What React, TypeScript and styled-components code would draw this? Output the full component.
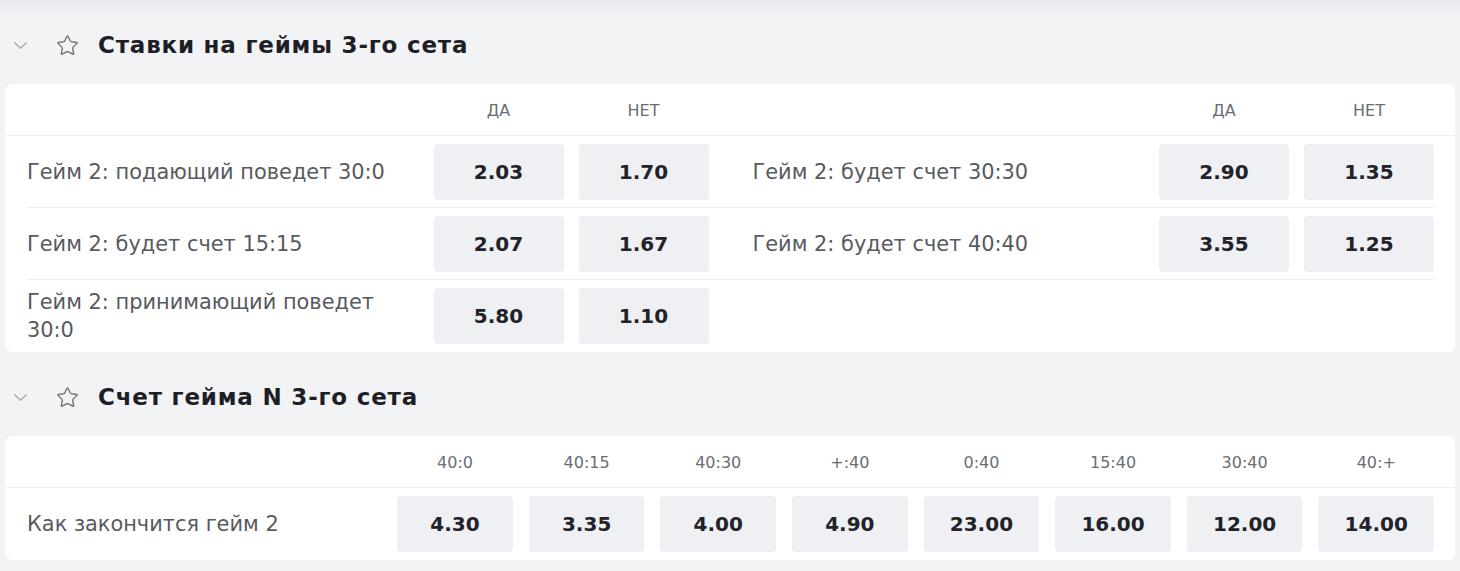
import React from "react";
import styled, { createGlobalStyle } from "styled-components";
import { ChevronDown, Star } from "lucide-react";

const Global = createGlobalStyle`
  html, body { margin: 0; padding: 0; background: #f2f3f5; }
  body { font-family: "DejaVu Sans", "Noto Sans", sans-serif; }
  * { box-sizing: border-box; }
`;

const Page = styled.div`
  width: 1460px;
  padding: 0 5px;
  background: linear-gradient(#e8e9ec 0px, #f2f3f5 18px);
`;

const Section = styled.section``;

const SectionHeader = styled.div`
  height: 84px;
  padding: 6px 0 0 4px;
  display: flex;
  align-items: center;
`;

const Chevron = styled(ChevronDown)`
  color: #a0a3a8;
  width: 23px;
  height: 23px;
  margin-right: 24px;
`;

const StarIcon = styled(Star)`
  color: #6b6e73;
  width: 23px;
  height: 23px;
  margin-right: 19px;
`;

const Title = styled.h2`
  margin: 0;
  font-family: "DejaVu Sans", sans-serif;
  font-size: 23px;
  font-weight: 700;
  color: #1d1e26;
  letter-spacing: 0.8px;
`;

const Card = styled.div`
  background: #ffffff;
  border-radius: 8px;
  overflow: hidden;
`;

const HeadRow = styled.div`
  height: 52px;
  box-shadow: inset 0 -1px 0 #eceef1;
  padding: 0 21px 0 22px;
  display: flex;
  align-items: center;
  gap: 44px;
`;

const Body = styled.div`
  padding: 0 21px 0 22px;
`;

const Row = styled.div<{ $last?: boolean }>`
  display: flex;
  gap: 44px;
  min-height: 72px;
  box-shadow: ${(p) => (p.$last ? "none" : "inset 0 -1px 0 #eceef1")};
`;

const Half = styled.div<{ $cols: string; $gap: number }>`
  flex: 1;
  display: grid;
  grid-template-columns: ${(p) => p.$cols};
  column-gap: ${(p) => p.$gap}px;
  align-items: center;
  padding: 8px 0;
`;

const HeadHalf = styled.div<{ $cols: string; $gap: number }>`
  flex: 1;
  display: grid;
  grid-template-columns: ${(p) => p.$cols};
  column-gap: ${(p) => p.$gap}px;
  align-items: center;
`;

const ColLabel = styled.div`
  text-align: center;
  font-family: "DejaVu Sans", sans-serif;
  font-size: 16px;
  color: #6a6d72;
  padding-top: 1px;
`;

const Label = styled.div`
  font-family: "DejaVu Sans", sans-serif;
  font-size: 20.9px;
  line-height: 28px;
  color: #575a60;
`;

const Odd = styled.button`
  height: 56px;
  border: none;
  border-radius: 4px;
  background: #eef0f3;
  font-family: "DejaVu Sans", sans-serif;
  font-size: 20px;
  font-weight: 700;
  color: #22232a;
  cursor: pointer;
  padding: 0;
`;

type Bet = { label: string; yes: string; no: string };

const rows1: [Bet, Bet | null][] = [
  [
    { label: "Гейм 2: подающий поведет 30:0", yes: "2.03", no: "1.70" },
    { label: "Гейм 2: будет счет 30:30", yes: "2.90", no: "1.35" },
  ],
  [
    { label: "Гейм 2: будет счет 15:15", yes: "2.07", no: "1.67" },
    { label: "Гейм 2: будет счет 40:40", yes: "3.55", no: "1.25" },
  ],
  [{ label: "Гейм 2: принимающий поведет 30:0", yes: "5.80", no: "1.10" }, null],
];

const cols1 = "1fr 130px 130px";
const cols2 = "1fr repeat(8, 115.6px)";
const scores = ["40:0", "40:15", "40:30", "+:40", "0:40", "15:40", "30:40", "40:+"];
const odds2 = ["4.30", "3.35", "4.00", "4.90", "23.00", "16.00", "12.00", "14.00"];

const BetHalf = ({ bet }: { bet: Bet | null }) => (
  <Half $cols={cols1} $gap={15}>
    {bet && (
      <>
        <Label>{bet.label}</Label>
        <Odd>{bet.yes}</Odd>
        <Odd>{bet.no}</Odd>
      </>
    )}
  </Half>
);

const Header = ({ title }: { title: string }) => (
  <SectionHeader>
    <Chevron strokeWidth={1.4} />
    <StarIcon strokeWidth={1.4} />
    <Title>{title}</Title>
  </SectionHeader>
);

export default function App() {
  return (
    <>
      <Global />
      <Page>
        <Section>
          <Header title="Ставки на геймы 3-го сета" />
          <Card>
            <HeadRow>
              {[0, 1].map((i) => (
                <HeadHalf key={i} $cols={cols1} $gap={15}>
                  <span />
                  <ColLabel>ДА</ColLabel>
                  <ColLabel>НЕТ</ColLabel>
                </HeadHalf>
              ))}
            </HeadRow>
            <Body>
              {rows1.map(([a, b], i) => (
                <Row key={i} $last={i === rows1.length - 1}>
                  <BetHalf bet={a} />
                  <BetHalf bet={b} />
                </Row>
              ))}
            </Body>
          </Card>
        </Section>
        <Section>
          <Header title="Счет гейма N 3-го сета" />
          <Card>
            <HeadRow>
              <HeadHalf $cols={cols2} $gap={16}>
                <span />
                {scores.map((s) => (
                  <ColLabel key={s}>{s}</ColLabel>
                ))}
              </HeadHalf>
            </HeadRow>
            <Body>
              <Row $last>
                <Half $cols={cols2} $gap={16}>
                  <Label>Как закончится гейм 2</Label>
                  {odds2.map((o, i) => (
                    <Odd key={i}>{o}</Odd>
                  ))}
                </Half>
              </Row>
            </Body>
          </Card>
        </Section>
      </Page>
    </>
  );
}
